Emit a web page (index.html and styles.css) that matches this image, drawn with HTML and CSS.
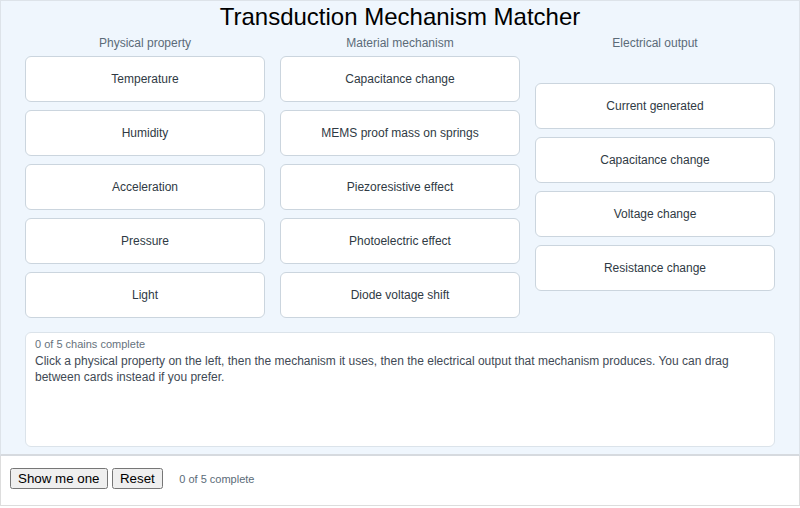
FILE: index.html
```html
<!DOCTYPE html>
<html>
<head>
<meta charset="utf-8">
<link rel="stylesheet" href="styles.css">
</head>
<body>
<div class="app">
  <h1 class="title">Transduction Mechanism Matcher</h1>
  <div class="columns">
    <div class="col">
      <div class="col-head">Physical property</div>
      <div class="cards">
        <div class="card">Temperature</div>
        <div class="card">Humidity</div>
        <div class="card">Acceleration</div>
        <div class="card">Pressure</div>
        <div class="card">Light</div>
      </div>
    </div>
    <div class="col">
      <div class="col-head">Material mechanism</div>
      <div class="cards">
        <div class="card">Capacitance change</div>
        <div class="card">MEMS proof mass on springs</div>
        <div class="card">Piezoresistive effect</div>
        <div class="card">Photoelectric effect</div>
        <div class="card">Diode voltage shift</div>
      </div>
    </div>
    <div class="col">
      <div class="col-head">Electrical output</div>
      <div class="cards">
        <div class="card">Current generated</div>
        <div class="card">Capacitance change</div>
        <div class="card">Voltage change</div>
        <div class="card">Resistance change</div>
      </div>
    </div>
  </div>
  <div class="status">
    <div class="status-count">0 of 5 chains complete</div>
    <p class="status-text">Click a physical property on the left, then the mechanism it uses, then the electrical output that mechanism produces. You can drag between cards instead if you prefer.</p>
  </div>
</div>
<div class="footer">
  <button class="btn">Show me one</button>
  <button class="btn">Reset</button>
  <span class="footer-status">0 of 5 complete</span>
</div>
</body>
</html>
```
FILE: styles.css
```css
html, body {
  margin: 0;
  padding: 0;
  background: #ffffff;
  font-family: "Liberation Sans", Arial, sans-serif;
}
.app {
  box-sizing: border-box;
  width: 800px;
  height: 456px;
  background: #eff6fd;
  border: 1px solid #dde3e9;
  border-bottom: 2px solid #d6dadf;
  padding: 2px 24px 0 24px;
}
.title {
  margin: 0;
  font-size: 24px;
  line-height: 28px;
  font-weight: normal;
  text-align: center;
  color: #000;
}
.columns {
  display: grid;
  grid-template-columns: 240px 240px 240px;
  column-gap: 15px;
  margin-top: 4px;
}
.col {
  display: flex;
  flex-direction: column;
}
.col-head {
  font-size: 12px;
  line-height: 16px;
  color: #5b6b78;
  text-align: center;
  margin-bottom: 5px;
}
.cards {
  flex: 1;
  display: flex;
  flex-direction: column;
  justify-content: center;
  gap: 8px;
}
.card {
  box-sizing: border-box;
  height: 46px;
  background: #ffffff;
  border: 1px solid #cbd5de;
  border-radius: 6px;
  display: flex;
  align-items: center;
  justify-content: center;
  font-size: 12px;
  color: #2f3a44;
}
.status {
  box-sizing: border-box;
  margin-top: 14px;
  height: 115px;
  background: #ffffff;
  border: 1px solid #dbe3ea;
  border-radius: 6px;
  padding: 5px 9px;
}
.status-count {
  font-size: 11px;
  line-height: 13px;
  color: #66727d;
}
.status-text {
  margin: 2px 0 0 0;
  font-size: 12px;
  line-height: 16px;
  color: #3f4a55;
}
.footer {
  box-sizing: border-box;
  width: 800px;
  height: 50px;
  border: 1px solid #dddddd;
  border-top: none;
  background: #ffffff;
  padding: 12px 9px 0 9px;
}
.btn {
  font-family: "Liberation Sans", Arial, sans-serif;
  font-size: 13.33px;
}
.footer-status {
  font-size: 11px;
  color: #5b6b78;
  margin-left: 12px;
}
```
